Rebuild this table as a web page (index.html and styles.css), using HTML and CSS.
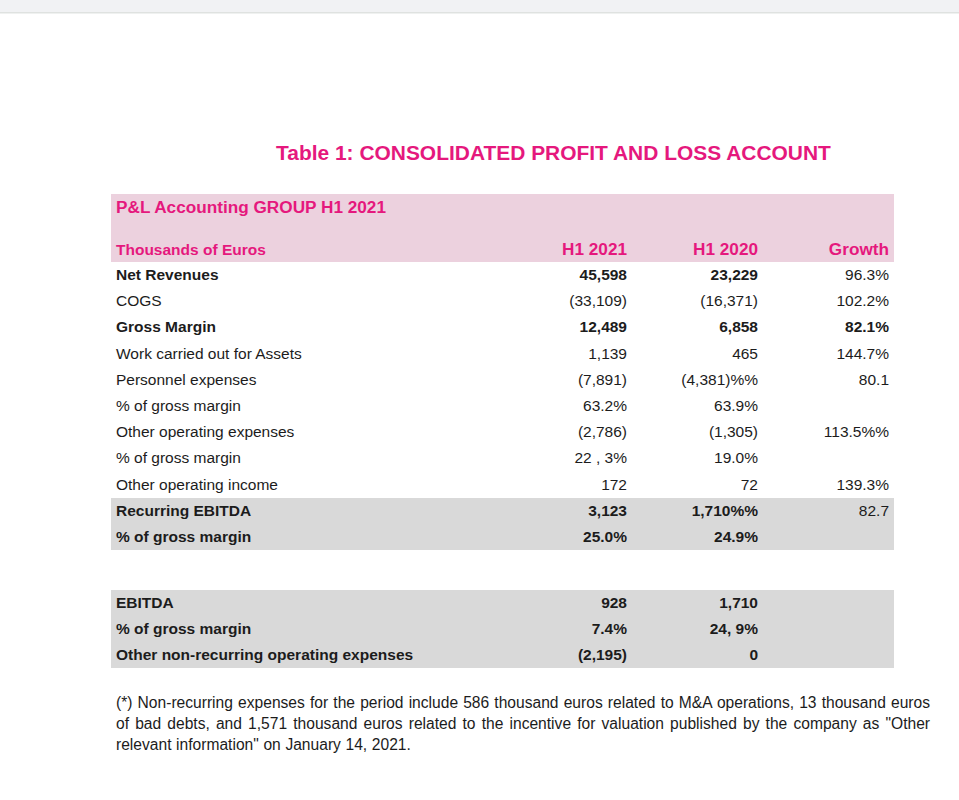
FILE: index.html
```html
<!DOCTYPE html>
<html lang="en">
<head>
<meta charset="utf-8">
<title>Table 1: Consolidated Profit and Loss Account</title>
<link rel="stylesheet" href="styles.css">
</head>
<body>
<div class="topbar"></div>
<main class="page">
  <h1 class="title">Table 1: CONSOLIDATED PROFIT AND LOSS ACCOUNT</h1>

  <section class="table">
    <div class="head">
      <div class="group">P&amp;L Accounting GROUP H1 2021</div>
      <div class="row colhead">
        <div class="label">Thousands of Euros</div>
        <div class="num big">H1 2021</div>
        <div class="num big">H1 2020</div>
        <div class="num big">Growth</div>
      </div>
    </div>

    <div class="row bold"><div class="label">Net Revenues</div><div class="num">45,598</div><div class="num">23,229</div><div class="num normal">96.3%</div></div>
    <div class="row"><div class="label">COGS</div><div class="num">(33,109)</div><div class="num">(16,371)</div><div class="num">102.2%</div></div>
    <div class="row bold"><div class="label">Gross Margin</div><div class="num">12,489</div><div class="num">6,858</div><div class="num">82.1%</div></div>
    <div class="row"><div class="label">Work carried out for Assets</div><div class="num">1,139</div><div class="num">465</div><div class="num">144.7%</div></div>
    <div class="row"><div class="label">Personnel expenses</div><div class="num">(7,891)</div><div class="num">(4,381)%%</div><div class="num">80.1</div></div>
    <div class="row"><div class="label">% of gross margin</div><div class="num">63.2%</div><div class="num">63.9%</div><div class="num"></div></div>
    <div class="row"><div class="label">Other operating expenses</div><div class="num">(2,786)</div><div class="num">(1,305)</div><div class="num">113.5%%</div></div>
    <div class="row"><div class="label">% of gross margin</div><div class="num">22 , 3%</div><div class="num">19.0%</div><div class="num"></div></div>
    <div class="row"><div class="label">Other operating income</div><div class="num">172</div><div class="num">72</div><div class="num">139.3%</div></div>
    <div class="row bold shade"><div class="label">Recurring EBITDA</div><div class="num">3,123</div><div class="num">1,710%%</div><div class="num normal">82.7</div></div>
    <div class="row bold shade"><div class="label">% of gross margin</div><div class="num">25.0%</div><div class="num">24.9%</div><div class="num"></div></div>
  </section>

  <section class="table second">
    <div class="row bold shade r26"><div class="label">EBITDA</div><div class="num">928</div><div class="num">1,710</div><div class="num"></div></div>
    <div class="row bold shade r26"><div class="label">% of gross margin</div><div class="num">7.4%</div><div class="num">24, 9%</div><div class="num"></div></div>
    <div class="row bold shade r26"><div class="label">Other non-recurring operating expenses</div><div class="num">(2,195)</div><div class="num">0</div><div class="num"></div></div>
  </section>

  <p class="note">(*) Non-recurring expenses for the period include 586 thousand euros related to M&amp;A operations, 13 thousand euros of bad debts, and 1,571 thousand euros related to the incentive for valuation published by the company as "Other relevant information" on January 14, 2021.</p>
</main>
</body>
</html>
```

FILE: styles.css
```css
html, body {
  margin: 0;
  padding: 0;
  background: #ffffff;
}

body {
  font-family: "Liberation Sans", Arial, sans-serif;
  color: #1c1c1c;
}

.topbar {
  height: 12px;
  background: #f1f2f4;
  border-bottom: 1px solid #dfe2e0;
  box-shadow: 0 1px 0 #eff1f0;
}

.page {
  padding-left: 111px;
  width: 783px;
}

.title {
  margin: 128px 0 0 165px;
  font-size: 20.95px;
  line-height: 24px;
  font-weight: bold;
  color: #e5187d;
  white-space: nowrap;
}

.table {
  margin-top: 29px;
  width: 783px;
}

.head {
  background: #ecd1de;
  color: #e5187d;
  font-weight: bold;
}

.group {
  height: 26px;
  line-height: 26px;
  padding-left: 5px;
  font-size: 17.2px;
}

.row {
  display: grid;
  grid-template-columns: 380px 131px 131px 131px;
  padding: 0 5px;
  height: 26.2px;
  align-items: center;
  font-size: 15.5px;
}

.colhead {
  margin-top: 17px;
  height: 25px;
}

.num {
  text-align: right;
  white-space: nowrap;
}

.big {
  font-size: 17.2px;
}

.bold {
  font-weight: bold;
}

.bold .normal {
  font-weight: normal;
}

.shade {
  background: #d9d9d9;
}

.second {
  margin-top: 40px;
}

.r26 {
  height: 26px;
}

.note {
  margin: 24px 0 0 5px;
  width: 814px;
  font-size: 15.6px;
  line-height: 21px;
  word-spacing: 0.3px;
  text-align: justify;
  color: #1c1c1c;
}
```
